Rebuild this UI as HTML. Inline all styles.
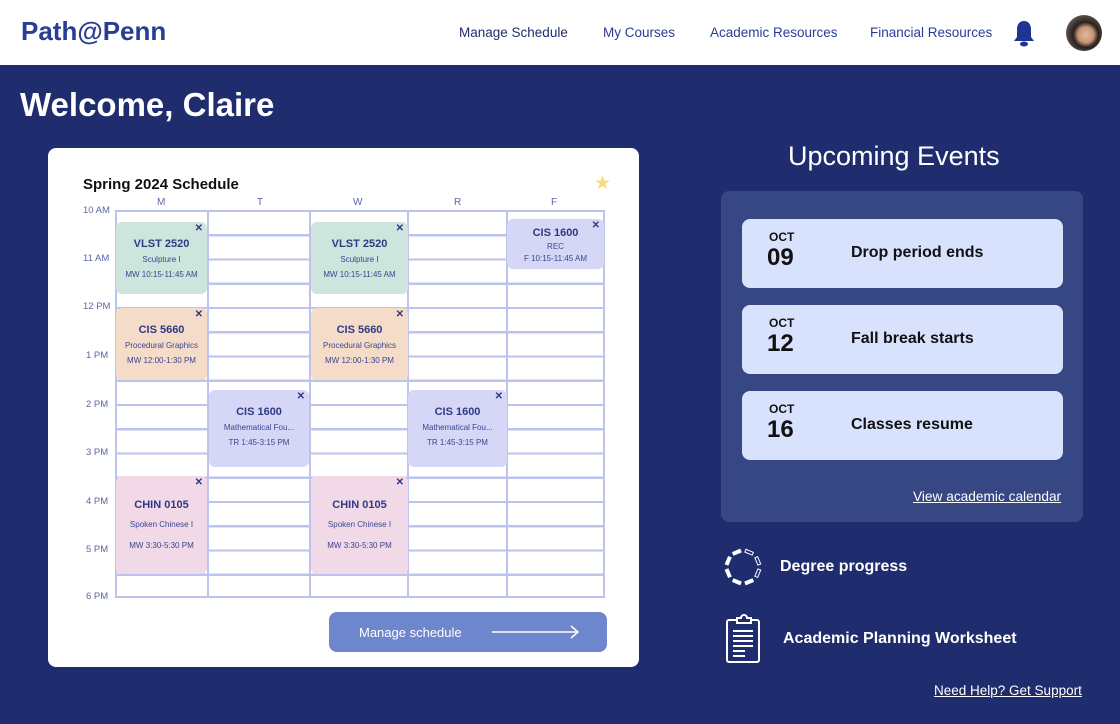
<!DOCTYPE html>
<html><head><meta charset="utf-8"><style>
*{margin:0;padding:0;box-sizing:border-box}
body{width:1120px;height:724px;overflow:hidden;background:#1f2d6e;font-family:"Liberation Sans",sans-serif;position:relative}
.a{position:absolute}
.hdr{left:0;top:0;width:1120px;height:67px;background:#fff;border-bottom:2px solid #1a2a78}
.logo{left:21px;top:16px;font-size:26px;font-weight:bold;color:#2a3d96}
.nav{top:25px;font-size:13.5px;color:#1f2d6e}
.card{left:48px;top:148px;width:591px;height:519px;background:#fff;border-radius:8px}
.grid{left:115px;top:210px;width:490px;height:388px;border:2px solid #bcc3ec;background:repeating-linear-gradient(to bottom,transparent 0,transparent 22.2px,#bcc3ec 22.2px,#bcc3ec 24.25px)}
.vl{top:210px;width:2px;height:388px;background:#bcc3ec}
.tl{font-size:9.5px;color:#5a66a8;left:83px}
.dl{font-size:10px;color:#5a66a8;top:197px}
.ev{border-radius:6px;text-align:center;color:#3a4690}
.ev b{display:block;font-size:11px;color:#2e3a85;margin-top:16px}
.ev i{font-style:normal;display:block;font-size:8px;margin-top:5px}
.ev s{text-decoration:none;display:block;font-size:8px;margin-top:6px}
.x{position:absolute;right:4px;top:1px;font-size:10px;font-weight:bold;color:#2e3a85}
.g{background:#cde5dd}.o{background:#f4dcc8}.p{background:#d6d6f6}.k{background:#f1d9e8}
.evt{left:742px;width:321px;height:69px;background:#d9e2fc;border-radius:8px}
.evt .m{position:absolute;left:27px;top:11px;font-size:12px;font-weight:bold;color:#111}
.evt .d{position:absolute;left:25px;top:25px;font-size:24px;font-weight:bold;color:#111}
.evt .t{position:absolute;left:109px;top:25px;font-size:16px;font-weight:bold;color:#111}
</style></head><body>
<div class="a hdr"></div>
<div class="a logo">Path@Penn</div>
<div class="a nav" style="left:459px">Manage Schedule</div>
<div class="a nav" style="left:603px;color:#2a3d96">My Courses</div>
<div class="a nav" style="left:710px;color:#2a3d96">Academic Resources</div>
<div class="a nav" style="left:870px;color:#2a3d96">Financial Resources</div>
<svg class="a" style="left:1013px;top:20px" width="22" height="27" viewBox="0 0 22 27"><path d="M11 1c-5 0-7 4-7 8v8l-3 4h20l-3-4V9c0-4-2-8-7-8z" fill="#1f3594"/><ellipse cx="11" cy="24" rx="4" ry="2.5" fill="#1f3594"/></svg>
<div class="a" style="left:1066px;top:15px;width:36px;height:36px;border-radius:50%;background:radial-gradient(circle at 55% 55%,#e3b89a 0,#c79477 28%,#2a2020 45%,#5a5048 70%,#8a8070 100%)"></div>
<div class="a" style="left:20px;top:86px;font-size:33px;font-weight:bold;color:#fff">Welcome, Claire</div>

<div class="a card"></div>
<div class="a" style="left:83px;top:176px;font-size:15px;font-weight:bold;color:#111">Spring 2024 Schedule</div>
<div class="a" style="left:594px;top:172px;font-size:19px;color:#f3dc7c">★</div>
<div class="a dl" style="left:157px">M</div><div class="a dl" style="left:257px">T</div><div class="a dl" style="left:353px">W</div><div class="a dl" style="left:454px">R</div><div class="a dl" style="left:551px">F</div>
<div class="a tl" style="top:205px">10 AM</div><div class="a tl" style="top:253px">11 AM</div><div class="a tl" style="top:301px">12 PM</div><div class="a tl" style="top:350px;left:86px">1 PM</div><div class="a tl" style="top:399px;left:86px">2 PM</div><div class="a tl" style="top:447px;left:86px">3 PM</div><div class="a tl" style="top:496px;left:86px">4 PM</div><div class="a tl" style="top:544px;left:86px">5 PM</div><div class="a tl" style="top:591px;left:86px">6 PM</div>
<div class="a grid"></div>
<div class="a vl" style="left:207px"></div><div class="a vl" style="left:309px"></div><div class="a vl" style="left:407px"></div><div class="a vl" style="left:506px"></div>

<div class="a ev g" style="left:116px;top:222px;width:91px;height:72px"><span class="x">✕</span><b>VLST 2520</b><i>Sculpture I</i><s>MW 10:15-11:45 AM</s></div>
<div class="a ev g" style="left:311px;top:222px;width:97px;height:72px"><span class="x">✕</span><b>VLST 2520</b><i>Sculpture I</i><s>MW 10:15-11:45 AM</s></div>
<div class="a ev o" style="left:116px;top:308px;width:91px;height:72px"><span class="x">✕</span><b>CIS 5660</b><i>Procedural Graphics</i><s>MW 12:00-1:30 PM</s></div>
<div class="a ev o" style="left:311px;top:308px;width:97px;height:72px"><span class="x">✕</span><b>CIS 5660</b><i>Procedural Graphics</i><s>MW 12:00-1:30 PM</s></div>
<div class="a ev p" style="left:209px;top:390px;width:100px;height:77px"><span class="x">✕</span><b>CIS 1600</b><i>Mathematical Fou...</i><s>TR 1:45-3:15 PM</s></div>
<div class="a ev p" style="left:408px;top:390px;width:99px;height:77px"><span class="x">✕</span><b>CIS 1600</b><i>Mathematical Fou...</i><s>TR 1:45-3:15 PM</s></div>
<div class="a ev p" style="left:507px;top:219px;width:97px;height:50px"><span class="x">✕</span><b style="margin-top:8px">CIS 1600</b><i style="margin-top:3px">REC</i><s style="margin-top:3px">F 10:15-11:45 AM</s></div>
<div class="a ev k" style="left:116px;top:476px;width:91px;height:98px"><span class="x">✕</span><b style="margin-top:23px">CHIN 0105</b><i style="margin-top:9px">Spoken Chinese I</i><s style="margin-top:12px">MW 3:30-5:30 PM</s></div>
<div class="a ev k" style="left:311px;top:476px;width:97px;height:98px"><span class="x">✕</span><b style="margin-top:23px">CHIN 0105</b><i style="margin-top:9px">Spoken Chinese I</i><s style="margin-top:12px">MW 3:30-5:30 PM</s></div>

<div class="a" style="left:329px;top:612px;width:278px;height:40px;background:#6e86cb;border-radius:8px"></div>
<div class="a" style="left:359px;top:625px;font-size:13px;color:#fff">Manage schedule</div>
<svg class="a" style="left:491px;top:624px" width="90" height="16"><path d="M1 8H87M80 2l7 6-7 6" stroke="#fff" stroke-width="1.5" fill="none"/></svg>

<div class="a" style="left:788px;top:141px;font-size:27px;color:#fff">Upcoming Events</div>
<div class="a" style="left:721px;top:191px;width:362px;height:331px;background:#374784;border-radius:8px"></div>
<div class="a evt" style="top:219px"><span class="m">OCT</span><span class="d">09</span><span class="t">Drop period ends</span></div>
<div class="a evt" style="top:305px"><span class="m">OCT</span><span class="d">12</span><span class="t">Fall break starts</span></div>
<div class="a evt" style="top:391px"><span class="m">OCT</span><span class="d">16</span><span class="t">Classes resume</span></div>
<div class="a" style="left:913px;top:489px;font-size:13.7px;color:#fff;text-decoration:underline">View academic calendar</div>

<svg class="a" style="left:722px;top:546px" width="42" height="42" viewBox="-21 -21 42 42">
<g fill="#fff"><rect x="14" y="-4.5" width="4" height="9" transform="rotate(112.5)"/><rect x="14" y="-4.5" width="4" height="9" transform="rotate(157.5)"/><rect x="14" y="-4.5" width="4" height="9" transform="rotate(202.5)"/><rect x="14" y="-4.5" width="4" height="9" transform="rotate(247.5)"/><rect x="14" y="-4.5" width="4" height="9" transform="rotate(67.5)"/></g>
<g fill="none" stroke="#fff" stroke-width="1"><rect x="14.5" y="-4" width="3" height="8" transform="rotate(-67.5)"/><rect x="14.5" y="-4" width="3" height="8" transform="rotate(-22.5)"/><rect x="14.5" y="-4" width="3" height="8" transform="rotate(22.5)"/></g></svg>
<div class="a" style="left:780px;top:558px;font-size:16px;font-weight:bold;color:#fff">Degree progress</div>
<svg class="a" style="left:725px;top:614px" width="38" height="50" viewBox="0 0 38 50"><rect x="2" y="6" width="32" height="42" rx="2" fill="none" stroke="#fff" stroke-width="2"/><path d="M12 9V4h4a3 3 0 0 1 6 0h4v5z" fill="#1f2d6e" stroke="#fff" stroke-width="2"/><path d="M8 17h20M8 22h20M8 27h20M8 32h20M8 37h12M8 42h12" stroke="#fff" stroke-width="2"/></svg>
<div class="a" style="left:783px;top:630px;font-size:16px;font-weight:bold;color:#fff">Academic Planning Worksheet</div>
<div class="a" style="left:934px;top:683px;font-size:13.5px;color:#fff;text-decoration:underline">Need Help? Get Support</div>
</body></html>
